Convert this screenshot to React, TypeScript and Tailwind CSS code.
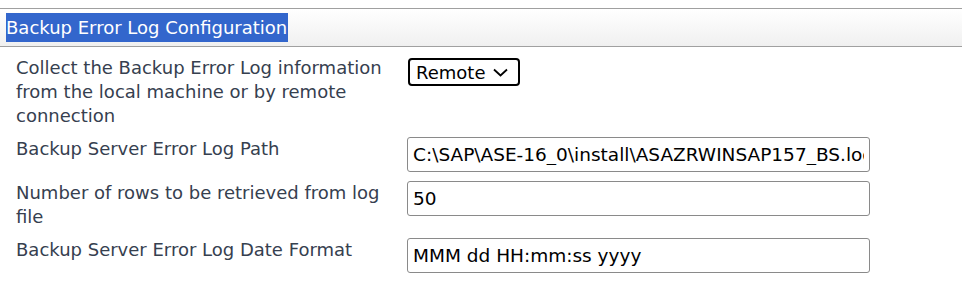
import React from "react";

const font = { fontFamily: '"DejaVu Sans", Tahoma, Verdana, sans-serif' };

function Row({ label, children }: { label: React.ReactNode; children: React.ReactNode }) {
  return (
    <div className="grid grid-cols-[391px_463px] items-start">
      <div className="text-[18px] leading-[24px] text-[#36404f] pr-[6px]">{label}</div>
      <div>{children}</div>
    </div>
  );
}

function TextInput({ value }: { value: string }) {
  return (
    <input
      readOnly
      value={value}
      className="block w-[463px] h-[35px] border border-[#8a8a8a] rounded-[3px] px-[5px] text-[18.5px] text-black bg-white outline-none"
      style={font}
    />
  );
}

export default function App() {
  return (
    <div className="w-[962px] h-[284px] bg-white pt-[8px]" style={font}>
      <div className="h-[39px] border-t border-b border-[#a0a0a0] bg-gradient-to-b from-white to-[#f0f0f0] pl-[6px] pt-[4px]">
        <span className="inline-block bg-[#3366cc] text-white text-[18px] leading-[29px] pr-[1px]">
          Backup Error Log Configuration
        </span>
      </div>
      <div className="pl-[16px] pt-[9px] flex flex-col gap-[9px]">
        <Row label="Collect the Backup Error Log information from the local machine or by remote connection">
          <div className="ml-[1px] mt-[2px] inline-flex items-center h-[28px] border-2 border-black rounded-[4px] pl-[6px] pr-[10px] text-[18px] text-black">
            <span>Remote</span>
            <svg width="15" height="9" viewBox="0 0 15 9" className="ml-[8px]" fill="none">
              <path d="M1 1.5 L7.5 7.5 L14 1.5" stroke="black" strokeWidth="1.8" />
            </svg>
          </div>
        </Row>
        <Row label="Backup Server Error Log Path">
          <TextInput value="C:\SAP\ASE-16_0\install\ASAZRWINSAP157_BS.log" />
        </Row>
        <Row label="Number of rows to be retrieved from log file">
          <TextInput value="50" />
        </Row>
        <Row label="Backup Server Error Log Date Format">
          <TextInput value="MMM dd HH:mm:ss yyyy" />
        </Row>
      </div>
    </div>
  );
}
